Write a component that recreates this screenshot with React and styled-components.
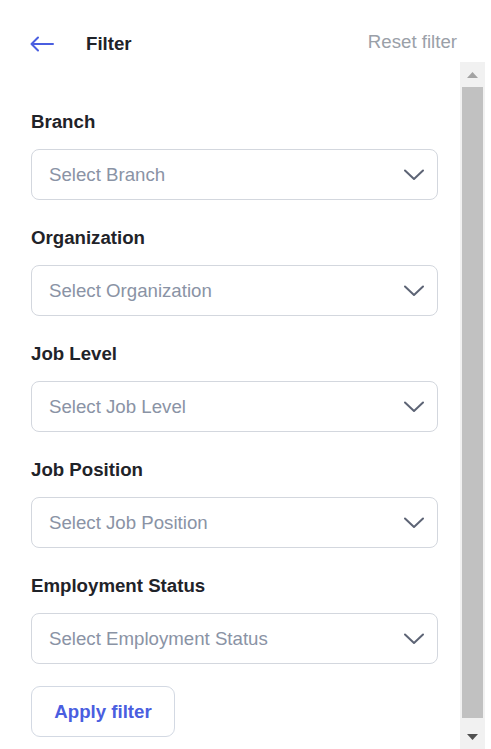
import React from 'react';
import styled, { createGlobalStyle } from 'styled-components';

const GlobalStyle = createGlobalStyle`
  html, body {
    margin: 0;
    padding: 0;
    height: 100%;
    background: #ffffff;
    font-family: "Liberation Sans", Arial, sans-serif;
  }
  #root {
    height: 100%;
  }
`;

const Page = styled.div`
  height: 100vh;
  display: flex;
  flex-direction: column;
  box-sizing: border-box;
  padding-right: 6px;
  overflow: hidden;
`;

const Header = styled.header`
  display: flex;
  align-items: center;
  height: 62px;
  box-sizing: border-box;
  padding: 33px 28px 7px 30px;
  flex-shrink: 0;
`;

const BackButton = styled.button`
  border: none;
  background: none;
  padding: 0;
  margin: 0 32px 0 0;
  display: flex;
  align-items: center;
  cursor: pointer;
`;

const Title = styled.h1`
  margin: 0;
  font-size: 18.67px;
  line-height: 22px;
  font-weight: 700;
  color: #1f2329;
  flex: 1;
`;

const ResetButton = styled.button`
  border: none;
  background: none;
  padding: 0 0 4px 0;
  font-family: inherit;
  font-size: 18.67px;
  line-height: 22px;
  color: #9aa0a8;
  cursor: pointer;
`;

const Body = styled.div`
  flex: 1;
  min-height: 0;
  display: flex;
`;

const Scroller = styled.div`
  flex: 1;
  min-width: 0;
  overflow: hidden;
  padding: 49px 22px 19px 31px;
  box-sizing: border-box;
`;

/* drawn scrollbar: the headless browser hides native ones */
const ScrollTrack = styled.div`
  width: 25px;
  flex-shrink: 0;
  display: flex;
  flex-direction: column;
  background: #f1f1f1;
`;

const ScrollArrow = styled.div`
  height: 25px;
  flex-shrink: 0;
  display: flex;
  align-items: center;
  justify-content: center;
`;

const ThumbArea = styled.div`
  flex: 1;
  display: flex;
  flex-direction: column;
  padding: 0 2px 6px 2px;
`;

const Thumb = styled.div`
  flex: 1;
  background: #c1c1c1;
`;

const Form = styled.div`
  display: flex;
  flex-direction: column;
  gap: 26.6px;
`;

const Field = styled.div`
  display: flex;
  flex-direction: column;
  gap: 16px;
`;

const Label = styled.label`
  font-size: 18.67px;
  line-height: 22.4px;
  font-weight: 700;
  color: #1f2329;
`;

const SelectBox = styled.button`
  display: flex;
  align-items: center;
  justify-content: space-between;
  width: 100%;
  height: 51px;
  box-sizing: border-box;
  padding: 0 13px 0 17px;
  border: 1px solid #d3d7de;
  border-radius: 8px;
  background: #fff;
  font-family: inherit;
  font-size: 18.67px;
  color: #8a93a5;
  text-align: left;
  cursor: pointer;
`;

const ApplyButton = styled.button`
  margin-top: 22px;
  width: 144px;
  height: 51px;
  box-sizing: border-box;
  border: 1px solid #d3d9e3;
  border-radius: 9px;
  background: #fff;
  font-family: inherit;
  font-size: 18.67px;
  font-weight: 700;
  color: #4a5ee0;
  cursor: pointer;
`;

const Chevron = () => (
  <svg width="20" height="12" viewBox="0 0 20 12" fill="none">
    <polyline points="1,1.5 10,10 19,1.5" stroke="#5d6475" strokeWidth="2" strokeLinecap="round" strokeLinejoin="round" />
  </svg>
);

const BackArrow = () => (
  <svg width="24" height="16" viewBox="0 0 24 16" fill="none">
    <path d="M23 8H1.5M8 1.5L1.5 8l6.5 6.5" stroke="#4a5ee0" strokeWidth="2" strokeLinecap="round" strokeLinejoin="round" />
  </svg>
);

const Triangle = ({ down, color }) => (
  <svg width="11" height="6" viewBox="0 0 11 6">
    <polygon points={down ? '0,0 5.5,6 11,0' : '0,6 5.5,0 11,6'} fill={color} />
  </svg>
);

const fields = [
  { label: 'Branch', placeholder: 'Select Branch' },
  { label: 'Organization', placeholder: 'Select Organization' },
  { label: 'Job Level', placeholder: 'Select Job Level' },
  { label: 'Job Position', placeholder: 'Select Job Position' },
  { label: 'Employment Status', placeholder: 'Select Employment Status' },
];

const App = () => {
  return (
    <>
      <GlobalStyle />
      <Page>
        <Header>
          <BackButton aria-label="Back">
            <BackArrow />
          </BackButton>
          <Title>Filter</Title>
          <ResetButton>Reset filter</ResetButton>
        </Header>
        <Body>
          <Scroller>
            <Form>
              {fields.map((f) => (
                <Field key={f.label}>
                  <Label>{f.label}</Label>
                  <SelectBox>
                    <span>{f.placeholder}</span>
                    <Chevron />
                  </SelectBox>
                </Field>
              ))}
            </Form>
            <ApplyButton>Apply filter</ApplyButton>
          </Scroller>
          <ScrollTrack>
            <ScrollArrow>
              <Triangle color="#a3a3a3" />
            </ScrollArrow>
            <ThumbArea>
              <Thumb />
            </ThumbArea>
            <ScrollArrow>
              <Triangle down color="#505050" />
            </ScrollArrow>
          </ScrollTrack>
        </Body>
      </Page>
    </>
  );
};

export default App;
